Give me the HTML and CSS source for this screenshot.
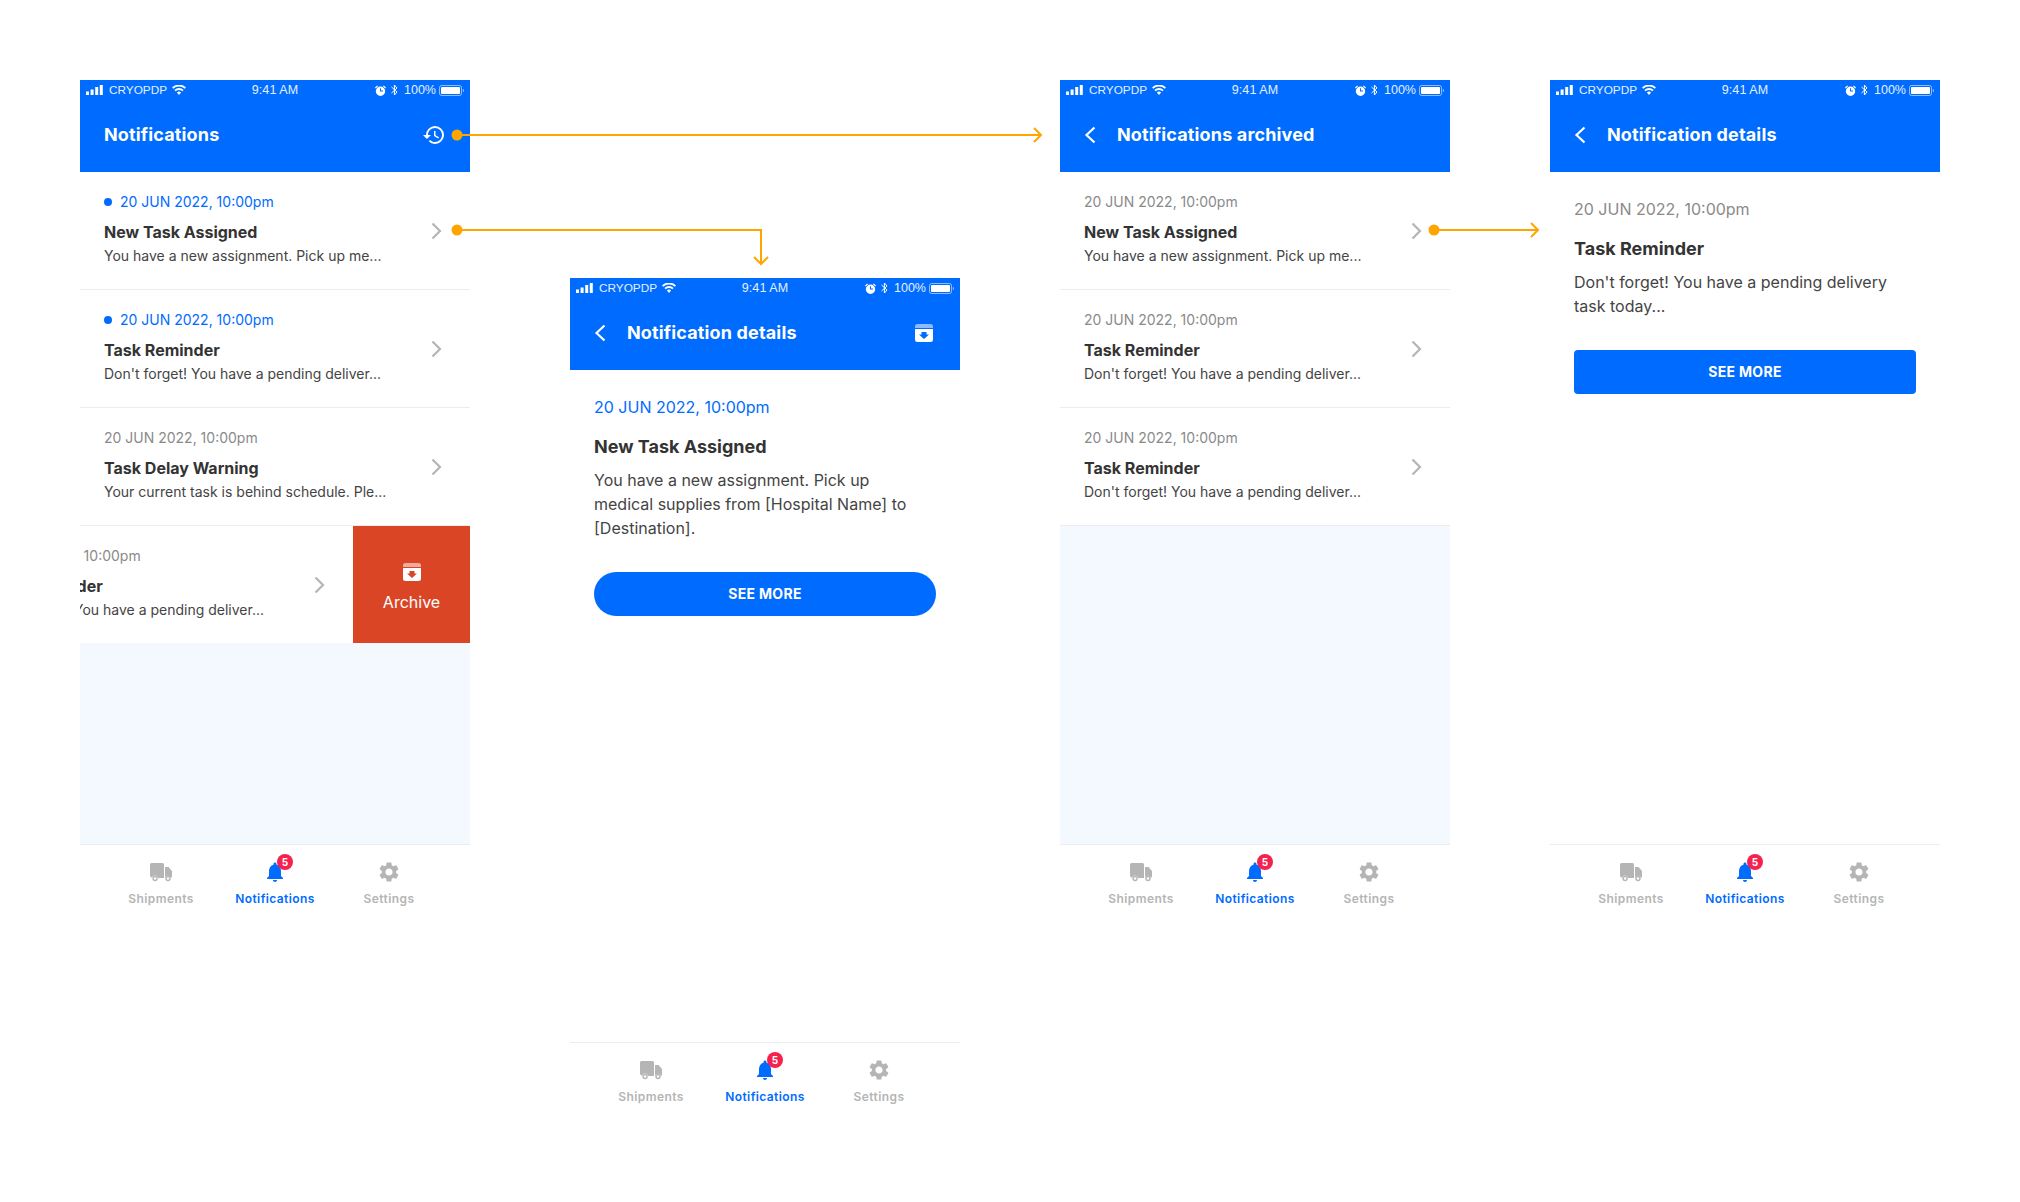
FILE: index.html
```html
<!DOCTYPE html>
<html lang="en">
<head>
<meta charset="utf-8">
<title>Notifications flow</title>
<link rel="stylesheet" href="styles.css">
</head>
<body>
<svg class="defs" width="0" height="0" aria-hidden="true">
  <defs>
    <symbol id="signal" viewBox="0 0 17 10"><path d="M0 6.500h3V10H0zM4.600 4.500h3V10h-3zM9.200 2h3v8h-3zM13.800 0h3v10h-3z" fill="currentColor"/></symbol>
    <symbol id="wifi" viewBox="0 0 14 10"><path d="M7 10 4.900 7.600a3 3 0 0 1 4.200 0zM3.700 6.300 2.400 4.900a6.600 6.600 0 0 1 9.200 0l-1.300 1.400a4.700 4.700 0 0 0-6.600 0zM1.300 3.800 0 2.400a10 10 0 0 1 14 0l-1.300 1.400a8.200 8.200 0 0 0-11.400 0z" fill="currentColor"/></symbol>
    <symbol id="alarm" viewBox="0 0 11 11"><path d="M5.500 1.500a4.700 4.700 0 1 0 0 9.400 4.700 4.700 0 0 0 0-9.400zM8 6.500H5V3.200h1V5.500h2zM0 2.500 2.200.4 3 1.200.8 3.400zM11 2.500 8.800.4 8 1.200l2.200 2.200z" fill="currentColor" fill-rule="evenodd"/></symbol>
    <symbol id="bt" viewBox="0 0 7 12"><path d="M.5 3 6 8 3.400 11V1L6 4 .5 9" fill="none" stroke="currentColor" stroke-width="1"/></symbol>
    <symbol id="battery" viewBox="0 0 25 11"><rect x=".5" y=".5" width="22" height="10" rx="2" fill="none" stroke="currentColor" stroke-opacity=".55"/><rect x="2" y="2" width="19" height="7" rx=".8" fill="currentColor"/><path d="M23.800 4v3a1.500 1.500 0 0 0 0-3z" fill="currentColor" fill-opacity=".55"/></symbol>
    <symbol id="history" viewBox="0 0 24 24"><path d="M13 3a9 9 0 0 0-9 9H1l3.890 3.890.07.14L9 12H6c0-3.870 3.130-7 7-7s7 3.130 7 7-3.130 7-7 7c-1.930 0-3.680-.79-4.940-2.060l-1.420 1.420A8.954 8.954 0 0 0 13 21a9 9 0 0 0 0-18zm-1 5v5l4.280 2.540.72-1.210-3.500-2.080V8H12z" fill="currentColor"/></symbol>
    <symbol id="back" viewBox="0 0 12 18"><path d="M10.500 1.500 2.500 9l8 7.500" fill="none" stroke="currentColor" stroke-width="2.200"/></symbol>
    <symbol id="chev" viewBox="0 0 20 18"><path d="M6.500 1.500 14 9l-7.500 7.500" fill="none" stroke="currentColor" stroke-width="2.200"/></symbol>
    <symbol id="archive" viewBox="0 0 24 24"><path d="M3 7V5.500A2.500 2.500 0 0 1 5.500 3h13A2.500 2.500 0 0 1 21 5.500V7z" fill="currentColor" fill-opacity=".55"/><path d="M3 8h18v10.500a2.500 2.500 0 0 1-2.500 2.500h-13A2.500 2.500 0 0 1 3 18.500zm6.500 3v2.500H7l5 4.500 5-4.500h-2.500V11z" fill="currentColor" fill-rule="evenodd"/></symbol>
    <symbol id="truck" viewBox="0 0 24 24"><path d="M1 4.500A1.500 1.500 0 0 1 2.500 3h11A1.500 1.500 0 0 1 15 4.500V18H9.200a3.200 3.200 0 0 0-6.200-.2A2.500 2.500 0 0 1 1 15.500zM16 7h3.500L23 11v5.500a1.500 1.500 0 0 1-1 1.400 3.200 3.200 0 0 0-6-.1z" fill="currentColor"/><circle cx="6.100" cy="18.500" r="2" fill="none" stroke="currentColor" stroke-width="1.400"/><circle cx="19" cy="18.500" r="2" fill="none" stroke="currentColor" stroke-width="1.400"/></symbol>
    <symbol id="bell" viewBox="0 0 24 24"><path d="M12 22c1.100 0 2-.9 2-2h-4c0 1.100.89 2 2 2zm6-6v-5c0-3.070-1.640-5.640-4.500-6.320V4c0-.83-.67-1.500-1.500-1.500s-1.500.67-1.500 1.500v.68C7.630 5.360 6 7.920 6 11v5l-2 2v1h16v-1l-2-2z" fill="currentColor"/></symbol>
    <symbol id="gear" viewBox="0 0 24 24"><path d="M19.140 12.940c.04-.3.060-.61.060-.94 0-.32-.02-.64-.07-.94l2.030-1.580a.49.49 0 0 0 .12-.61l-1.920-3.320a.488.488 0 0 0-.59-.22l-2.390.96c-.5-.38-1.030-.7-1.620-.94l-.36-2.540a.484.484 0 0 0-.48-.41h-3.840c-.24 0-.43.17-.47.41l-.36 2.540c-.59.24-1.130.57-1.620.94l-2.390-.96c-.22-.08-.47 0-.59.22L2.740 8.870c-.12.21-.08.47.12.61l2.030 1.580c-.05.3-.09.63-.09.94s.02.64.07.94l-2.030 1.580a.49.49 0 0 0-.12.61l1.920 3.320c.12.22.37.29.59.22l2.390-.96c.5.38 1.030.7 1.620.94l.36 2.540c.05.24.24.41.48.41h3.840c.24 0 .44-.17.47-.41l.36-2.540c.59-.24 1.130-.56 1.620-.94l2.390.96c.22.08.47 0 .59-.22l1.920-3.320c.12-.22.07-.47-.12-.61l-2.010-1.580zM12 15.600c-1.980 0-3.600-1.620-3.600-3.600s1.620-3.600 3.600-3.600 3.600 1.620 3.600 3.600-1.620 3.600-3.600 3.600z" fill="currentColor"/></symbol>
  </defs>
</svg>

<main class="canvas">

  <section class="phone phone-a">
    <header class="appbar">
      <div class="status">
        <div class="status-l"><svg class="i-signal"><use href="#signal"/></svg><span>CRYOPDP</span><svg class="i-wifi"><use href="#wifi"/></svg></div>
        <div class="status-c">9:41 AM</div>
        <div class="status-r"><svg class="i-alarm"><use href="#alarm"/></svg><svg class="i-bt"><use href="#bt"/></svg><span>100%</span><svg class="i-batt"><use href="#battery"/></svg></div>
      </div>
      <div class="nav"><h1 class="nav-title">Notifications</h1><svg class="i-24 nav-end"><use href="#history"/></svg></div>
    </header>
    <div class="list">
      <article class="row">
        <div class="row-text">
          <div class="date unread"><i class="dot"></i>20 JUN 2022, 10:00pm</div>
          <h2 class="row-title">New Task Assigned</h2>
          <p class="row-desc">You have a new assignment. Pick up me...</p>
        </div>
        <svg class="i-chev"><use href="#chev"/></svg>
      </article>
      <article class="row">
        <div class="row-text">
          <div class="date unread"><i class="dot"></i>20 JUN 2022, 10:00pm</div>
          <h2 class="row-title">Task Reminder</h2>
          <p class="row-desc">Don't forget! You have a pending deliver...</p>
        </div>
        <svg class="i-chev"><use href="#chev"/></svg>
      </article>
      <article class="row">
        <div class="row-text">
          <div class="date">20 JUN 2022, 10:00pm</div>
          <h2 class="row-title">Task Delay Warning</h2>
          <p class="row-desc">Your current task is behind schedule. Ple...</p>
        </div>
        <svg class="i-chev"><use href="#chev"/></svg>
      </article>
      <article class="row row-swiped">
        <div class="swiped-body">
          <div class="row-text">
            <div class="date">20 JUN 2022, 10:00pm</div>
            <h2 class="row-title">Task Reminder</h2>
            <p class="row-desc">Don't forget! You have a pending deliver...</p>
          </div>
          <svg class="i-chev"><use href="#chev"/></svg>
        </div>
        <div class="swipe-action"><svg class="i-24"><use href="#archive"/></svg><span>Archive</span></div>
      </article>
    </div>
    <nav class="tabs">
      <div class="tab"><svg class="i-24"><use href="#truck"/></svg><span>Shipments</span></div>
      <div class="tab tab-on"><div class="bell"><svg class="i-24"><use href="#bell"/></svg><b class="badge">5</b></div><span>Notifications</span></div>
      <div class="tab"><svg class="i-24"><use href="#gear"/></svg><span>Settings</span></div>
    </nav>
  </section>

  <section class="phone phone-b">
    <header class="appbar">
      <div class="status">
        <div class="status-l"><svg class="i-signal"><use href="#signal"/></svg><span>CRYOPDP</span><svg class="i-wifi"><use href="#wifi"/></svg></div>
        <div class="status-c">9:41 AM</div>
        <div class="status-r"><svg class="i-alarm"><use href="#alarm"/></svg><svg class="i-bt"><use href="#bt"/></svg><span>100%</span><svg class="i-batt"><use href="#battery"/></svg></div>
      </div>
      <div class="nav"><svg class="i-back"><use href="#back"/></svg><h1 class="nav-title">Notification details</h1><svg class="i-24 nav-end"><use href="#archive"/></svg></div>
    </header>
    <div class="detail">
      <div class="detail-date unread">20 JUN 2022, 10:00pm</div>
      <h2 class="detail-title">New Task Assigned</h2>
      <p class="detail-desc">You have a new assignment. Pick up<br>medical supplies from [Hospital Name] to<br>[Destination].</p>
      <button class="btn btn-pill">SEE MORE</button>
    </div>
    <nav class="tabs">
      <div class="tab"><svg class="i-24"><use href="#truck"/></svg><span>Shipments</span></div>
      <div class="tab tab-on"><div class="bell"><svg class="i-24"><use href="#bell"/></svg><b class="badge">5</b></div><span>Notifications</span></div>
      <div class="tab"><svg class="i-24"><use href="#gear"/></svg><span>Settings</span></div>
    </nav>
  </section>

  <section class="phone phone-c">
    <header class="appbar">
      <div class="status">
        <div class="status-l"><svg class="i-signal"><use href="#signal"/></svg><span>CRYOPDP</span><svg class="i-wifi"><use href="#wifi"/></svg></div>
        <div class="status-c">9:41 AM</div>
        <div class="status-r"><svg class="i-alarm"><use href="#alarm"/></svg><svg class="i-bt"><use href="#bt"/></svg><span>100%</span><svg class="i-batt"><use href="#battery"/></svg></div>
      </div>
      <div class="nav"><svg class="i-back"><use href="#back"/></svg><h1 class="nav-title">Notifications archived</h1></div>
    </header>
    <div class="list">
      <article class="row">
        <div class="row-text">
          <div class="date">20 JUN 2022, 10:00pm</div>
          <h2 class="row-title">New Task Assigned</h2>
          <p class="row-desc">You have a new assignment. Pick up me...</p>
        </div>
        <svg class="i-chev"><use href="#chev"/></svg>
      </article>
      <article class="row">
        <div class="row-text">
          <div class="date">20 JUN 2022, 10:00pm</div>
          <h2 class="row-title">Task Reminder</h2>
          <p class="row-desc">Don't forget! You have a pending deliver...</p>
        </div>
        <svg class="i-chev"><use href="#chev"/></svg>
      </article>
      <article class="row">
        <div class="row-text">
          <div class="date">20 JUN 2022, 10:00pm</div>
          <h2 class="row-title">Task Reminder</h2>
          <p class="row-desc">Don't forget! You have a pending deliver...</p>
        </div>
        <svg class="i-chev"><use href="#chev"/></svg>
      </article>
    </div>
    <nav class="tabs">
      <div class="tab"><svg class="i-24"><use href="#truck"/></svg><span>Shipments</span></div>
      <div class="tab tab-on"><div class="bell"><svg class="i-24"><use href="#bell"/></svg><b class="badge">5</b></div><span>Notifications</span></div>
      <div class="tab"><svg class="i-24"><use href="#gear"/></svg><span>Settings</span></div>
    </nav>
  </section>

  <section class="phone phone-d">
    <header class="appbar">
      <div class="status">
        <div class="status-l"><svg class="i-signal"><use href="#signal"/></svg><span>CRYOPDP</span><svg class="i-wifi"><use href="#wifi"/></svg></div>
        <div class="status-c">9:41 AM</div>
        <div class="status-r"><svg class="i-alarm"><use href="#alarm"/></svg><svg class="i-bt"><use href="#bt"/></svg><span>100%</span><svg class="i-batt"><use href="#battery"/></svg></div>
      </div>
      <div class="nav"><svg class="i-back"><use href="#back"/></svg><h1 class="nav-title">Notification details</h1></div>
    </header>
    <div class="detail">
      <div class="detail-date">20 JUN 2022, 10:00pm</div>
      <h2 class="detail-title">Task Reminder</h2>
      <p class="detail-desc">Don't forget! You have a pending delivery<br>task today...</p>
      <button class="btn">SEE MORE</button>
    </div>
    <nav class="tabs">
      <div class="tab"><svg class="i-24"><use href="#truck"/></svg><span>Shipments</span></div>
      <div class="tab tab-on"><div class="bell"><svg class="i-24"><use href="#bell"/></svg><b class="badge">5</b></div><span>Notifications</span></div>
      <div class="tab"><svg class="i-24"><use href="#gear"/></svg><span>Settings</span></div>
    </nav>
  </section>

  <svg class="arrows" width="2020" height="1202" viewBox="0 0 2020 1202" aria-hidden="true">
    <g fill="none" stroke="#ffa500" stroke-width="2">
      <path d="M457 135H1041"/><path d="M1034 128l7 7-7 7"/>
      <path d="M457 230H761V264"/><path d="M754 257l7 7 7-7"/>
      <path d="M1434 230H1538"/><path d="M1531 223l7 7-7 7"/>
    </g>
    <g fill="#ffa500">
      <circle cx="457" cy="135" r="5.500"/>
      <circle cx="457" cy="230" r="5.500"/>
      <circle cx="1434" cy="230" r="5.500"/>
    </g>
  </svg>
</main>
</body>
</html>
```

FILE: styles.css
```css
* { box-sizing: border-box; }
html, body { margin: 0; padding: 0; background: #fff; }
body { font-family: Inter, "Liberation Sans", sans-serif; color: #333; }
h1, h2, p { margin: 0; }
.defs { position: absolute; }

.canvas { position: relative; width: 2020px; height: 1202px; overflow: hidden; }
.arrows { position: absolute; left: 0; top: 0; pointer-events: none; }

.phone {
  position: absolute;
  width: 390px;
  height: 850px;
  display: flex;
  flex-direction: column;
  background: #fff;
}
.phone-a { left: 80px; top: 80px; }
.phone-b { left: 570px; top: 278px; }
.phone-c { left: 1060px; top: 80px; }
.phone-d { left: 1550px; top: 80px; }

.appbar { background: #006cff; color: #fff; height: 92px; flex: none; }
.status {
  height: 20px;
  padding: 0 6px;
  display: grid;
  grid-template-columns: 1fr auto 1fr;
  align-items: center;
  font: 12px/20px "Liberation Sans", sans-serif;
  color: #e6f0ff;
}
.status-l, .status-r { display: flex; align-items: center; }
.status-r { justify-content: flex-end; }
.status-c { font-size: 12.500px; letter-spacing: .1px; }
.status-l span { margin: 0 5px 0 6px; font-size: 11.800px; }
.status-r span { margin: 0 3px 0 6px; font-size: 12.500px; }
.i-signal { width: 17px; height: 10px; color: #fff; }
.i-wifi { width: 14px; height: 10px; color: #fff; }
.i-alarm { width: 11px; height: 11px; margin-right: 5px; color: #fff; }
.i-bt { width: 7px; height: 12px; color: #fff; }
.i-batt { width: 25px; height: 11px; color: #fff; }

.nav { height: 70px; padding: 0 24px; display: flex; align-items: center; }
.nav-title { font-size: 18px; line-height: 24px; font-weight: 700; letter-spacing: .15px; color: #fff; }
.nav-end { margin-left: auto; }
.i-24 { width: 24px; height: 24px; flex: none; }
.i-back { width: 12px; height: 18px; margin-right: 21px; color: #fff; flex: none; }

.list { flex: 1; background: #f4f8ff; }
.row {
  height: 118px;
  padding: 20px 24px 0;
  display: flex;
  justify-content: space-between;
  background: #fff;
  border-bottom: 1px solid #ececec;
}
.row-text { display: flex; flex-direction: column; white-space: nowrap; }
.date { font-size: 14px; line-height: 20px; color: #8a8a8a; display: flex; align-items: center; }
.date.unread { color: #006cff; }
.dot { width: 8px; height: 8px; border-radius: 50%; background: #006cff; margin-right: 8px; }
.row-title { font-size: 16px; line-height: 24px; font-weight: 700; margin-top: 8px; color: #333; }
.row-desc { font-size: 14px; line-height: 20px; margin-top: 2px; color: #444; }
.i-chev { width: 20px; height: 18px; margin-top: 30px; color: #b5b5b5; flex: none; }

.row-swiped { padding: 0; border-bottom: 0; overflow: hidden; height: 117px; }
.swiped-body {
  flex: none;
  width: 390px;
  margin-left: -117px;
  padding: 20px 24px 0;
  display: flex;
  justify-content: space-between;
}
.swipe-action {
  flex: none;
  width: 117px;
  background: #da4526;
  color: #fff;
  display: flex;
  flex-direction: column;
  align-items: center;
  padding-top: 34px;
  font-size: 16px;
  line-height: 20px;
  gap: 8px;
}

.detail { flex: 1; padding: 0 24px; }
.detail-date { font-size: 16px; line-height: 24px; margin-top: 25px; color: #8a8a8a; }
.detail-date.unread { color: #006cff; }
.detail-title { font-size: 18px; line-height: 24px; font-weight: 700; margin-top: 16px; color: #333; }
.detail-desc { font-size: 16px; line-height: 24px; margin-top: 9px; color: #444; }
.btn {
  display: block;
  width: 342px;
  height: 44px;
  margin-top: 32px;
  border: 0;
  border-radius: 4px;
  background: #006cff;
  color: #fff;
  font: 700 14px/44px Inter, "Liberation Sans", sans-serif;
  letter-spacing: .3px;
  padding: 0;
}
.btn-pill { border-radius: 22px; }

.tabs {
  height: 86px;
  flex: none;
  border-top: 1px solid #ececec;
  padding: 15px 24px 0;
  display: grid;
  grid-template-columns: repeat(3, 114px);
  background: #fff;
}
.tab {
  display: flex;
  flex-direction: column;
  align-items: center;
  gap: 7px;
  color: #b5b5b5;
  font-size: 12px;
  line-height: 16px;
  font-weight: 600;
  letter-spacing: .4px;
}
.tab-on { color: #006cff; }
.bell { position: relative; width: 24px; height: 24px; }
.badge {
  position: absolute;
  left: 14px;
  top: -6px;
  width: 16px;
  height: 16px;
  border-radius: 50%;
  background: #f5224f;
  color: #fff;
  font-size: 10px;
  line-height: 16px;
  font-weight: 700;
  text-align: center;
  letter-spacing: 0;
}
```
